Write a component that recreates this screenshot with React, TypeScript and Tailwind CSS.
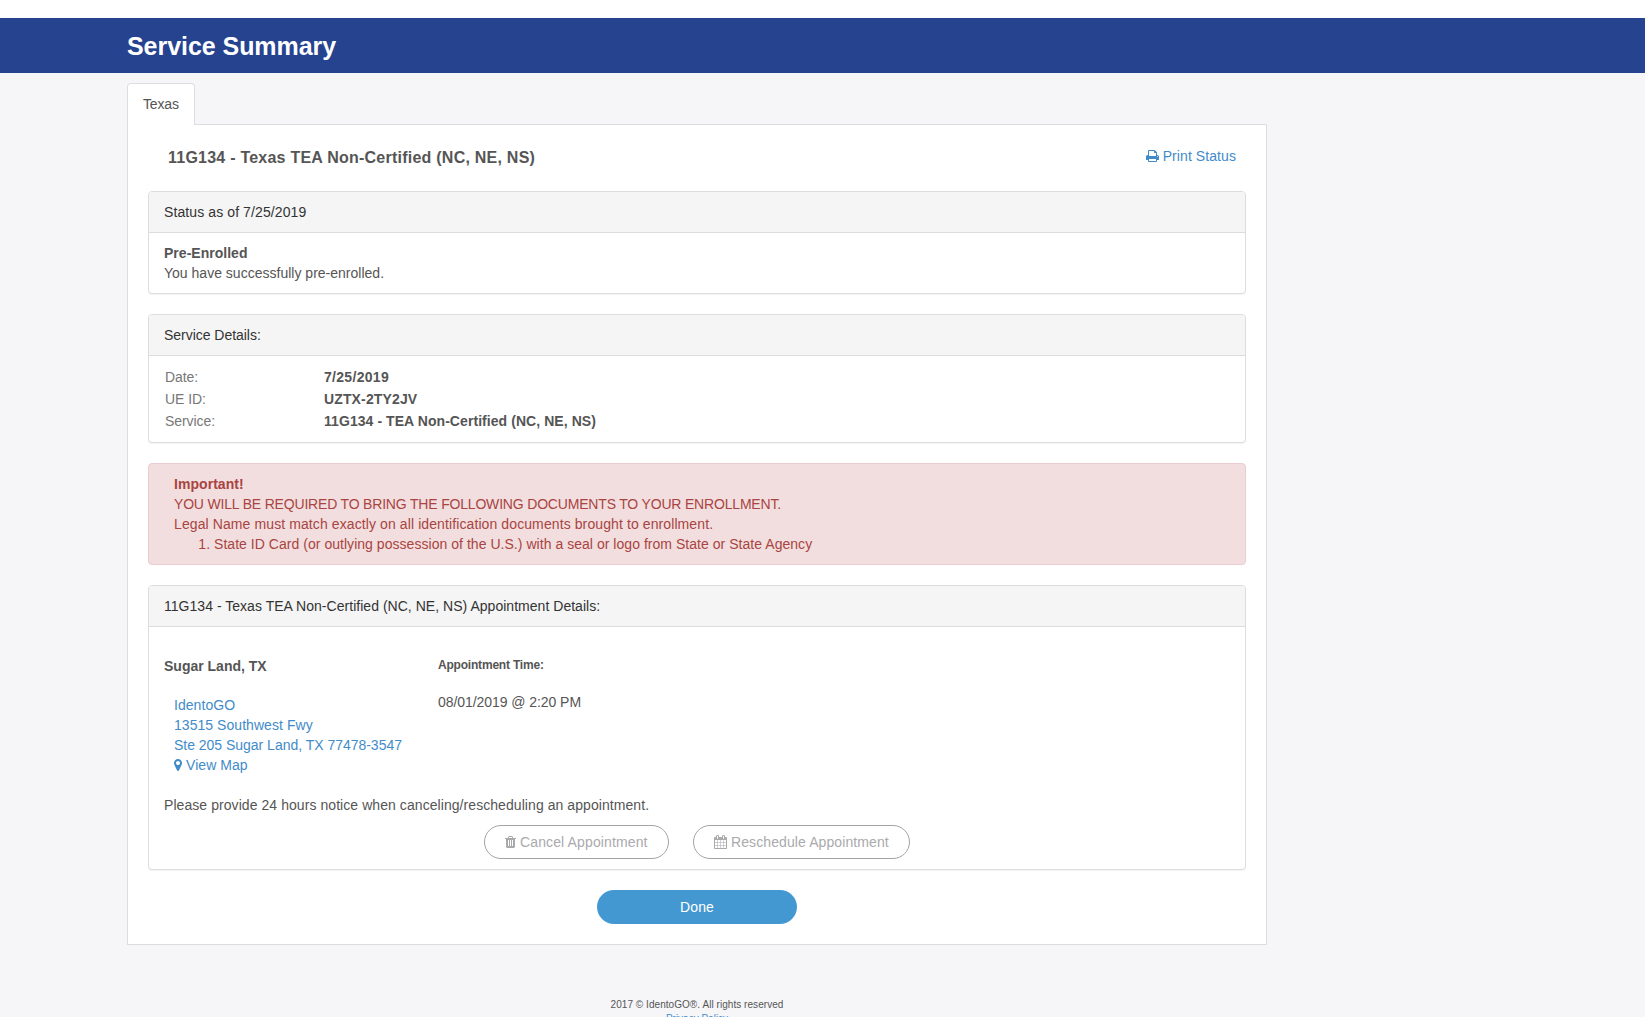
import type { ReactNode } from 'react';

function Glyph({ viewBox, d, className }: { viewBox: string; d: string; className: string }) {
  return (
    <svg viewBox={viewBox} fill="currentColor" aria-hidden="true" className={className}>
      <path d={d} />
    </svg>
  );
}

function PrintIcon() {
  return (
    <Glyph
      viewBox="64 0 1664 1792"
      className="h-[14px] w-[13px] shrink-0"
      d="M448 1536h896v-256h-896v256zm0-640h896v-384h-160q-40 0-68-28t-28-68v-160h-640v640zm1152 64q0-26-19-45t-45-19-45 19-19 45 19 45 45 19 45-19 19-45zm128 0v416q0 13-9.500 22.500t-22.500 9.500h-224v160q0 40-28 68t-68 28h-960q-40 0-68-28t-28-68v-160h-224q-13 0-22.500-9.500t-9.500-22.500v-416q0-79 56.500-135.500t135.500-56.500h64v-544q0-40 28-68t68-28h672q40 0 88 20t76 48l152 152q28 28 48 76t20 88v256h64q79 0 135.500 56.500t56.500 135.500z"
    />
  );
}

function MapMarkerIcon() {
  return (
    <Glyph
      viewBox="384 0 1024 1792"
      className="h-[14px] w-2 shrink-0"
      d="M1152 640q0-106-75-181t-181-75-181 75-75 181 75 181 181 75 181-75 75-181zm256 0q0 109-33 179l-364 774q-16 33-47.500 52t-67.500 19-67.500-19-46.500-52l-365-774q-33-70-33-179 0-212 150-362t362-150 362 150 150 362z"
    />
  );
}

function TrashIcon() {
  return (
    <Glyph
      viewBox="192 0 1408 1792"
      className="h-[14px] w-[11px] shrink-0"
      d="M704 1376v-704q0-14-9-23t-23-9h-64q-14 0-23 9t-9 23v704q0 14 9 23t23 9h64q14 0 23-9t9-23zm256 0v-704q0-14-9-23t-23-9h-64q-14 0-23 9t-9 23v704q0 14 9 23t23 9h64q14 0 23-9t9-23zm256 0v-704q0-14-9-23t-23-9h-64q-14 0-23 9t-9 23v704q0 14 9 23t23 9h64q14 0 23-9t9-23zm-544-992h448l-48-117q-7-9-17-11h-317q-10 2-17 11zm928 32v64q0 14-9 23t-23 9h-96v948q0 83-47 143.500t-113 60.500h-832q-66 0-113-58.500t-47-141.500v-952h-96q-14 0-23-9t-9-23v-64q0-14 9-23t23-9h309l70-167q15-37 54-63t79-26h320q40 0 79 26t54 63l70 167h309q14 0 23 9t9 23z"
    />
  );
}

function CalendarIcon() {
  return (
    <Glyph
      viewBox="64 0 1664 1792"
      className="h-[14px] w-[13px] shrink-0"
      d="M192 1664h288v-288h-288v288zm352 0h320v-288h-320v288zm-352-352h288v-320h-288v320zm352 0h320v-320h-320v320zm-352-384h288v-288h-288v288zm736 736h320v-288h-320v288zm-384-736h320v-288h-320v288zm768 736h288v-288h-288v288zm-384-352h320v-320h-320v320zm-352-864v-288q0-13-9.500-22.500t-22.500-9.500h-64q-13 0-22.500 9.500t-9.500 22.500v288q0 13 9.500 22.500t22.500 9.500h64q13 0 22.500-9.500t9.500-22.500zm736 864h288v-320h-288v320zm-384-384h320v-288h-320v288zm384 0h288v-288h-288v288zm32-480v-288q0-13-9.500-22.500t-22.500-9.500h-64q-13 0-22.500 9.500t-9.500 22.500v288q0 13 9.500 22.500t22.500 9.500h64q13 0 22.500-9.500t9.500-22.500zm384-64v1280q0 52-38 90t-90 38h-1408q-52 0-90-38t-38-90v-1280q0-52 38-90t90-38h128v-96q0-66 47-113t113-47h64q66 0 113 47t47 113v96h384v-96q0-66 47-113t113-47h64q66 0 113 47t47 113v96h128q52 0 90 38t38 90z"
    />
  );
}

function Card({ title, children }: { title: ReactNode; children: ReactNode }) {
  return (
    <section className="mb-5 rounded border border-[#ddd] bg-white shadow-[0_1px_1px_rgba(0,0,0,0.05)]">
      <div className="rounded-t-[3px] border-b border-[#ddd] bg-[#f5f5f5] px-[15px] py-[10px] text-[#333]">{title}</div>
      {children}
    </section>
  );
}

const details = [
  { label: 'Date:', value: <span className="tracking-[0.3px]">7/25/2019</span> },
  { label: 'UE ID:', value: <span className="tracking-[0.136px]">UZTX-2TY2JV</span> },
  { label: 'Service:', value: <span className="tracking-[0.066px]">11G134 - TEA Non-Certified (NC, NE, NS)</span> },
];

export default function App() {
  return (
    <div className="h-screen overflow-hidden bg-[#f6f6f9] font-['Liberation_Sans',Arial,sans-serif] text-sm leading-5 text-[#555]">
      <header className="border-t-[18px] border-white bg-[#26438f]">
        <h1 className="flex h-[55px] items-center pl-[127px] text-[25px] font-bold tracking-[-0.05px] text-white">
          Service Summary
        </h1>
      </header>

      <main className="ml-[127px] w-[1140px] pt-[10px]">
        <nav className="flex">
          <a className="relative z-10 -mb-px w-[68px] rounded-t border border-b-0 border-[#ddd] bg-white pt-[10px] pb-[11px] pl-[15px] tracking-[-0.15px]">
            Texas
          </a>
        </nav>

        <div className="border border-[#ddd] bg-white px-5">
          <div className="flex h-[66px] items-start justify-between pt-[21px] pr-[10px] pl-5">
            <h2 className="pt-0.5 text-base leading-5 font-bold tracking-[0.235px]">
              11G134 - Texas TEA Non-Certified (NC, NE, NS)
            </h2>
            <a className="flex items-center gap-1 tracking-[0.078px] text-[#428bca]">
              <PrintIcon />
              Print Status
            </a>
          </div>

          <Card title={<span className="tracking-[0.1px]">Status as of 7/25/2019</span>}>
            <div className="px-[15px] py-[10px]">
              <p className="font-bold tracking-[0.02px]">Pre-Enrolled</p>
              <p className="tracking-[0.01px]">You have successfully pre-enrolled.</p>
            </div>
          </Card>

          <Card title={<span className="tracking-[-0.03px]">Service Details:</span>}>
            <dl className="px-4 py-[10px]">
              {details.map((row) => (
                <div key={row.label} className="flex py-px">
                  <dt className="w-[159px] tracking-[-0.06px] text-[#777]">{row.label}</dt>
                  <dd className="font-bold">{row.value}</dd>
                </div>
              ))}
            </dl>
          </Card>

          <section className="mb-5 rounded border border-[#ebccd1] bg-[#f2dede] px-[25px] py-[10px] text-[#a94442]">
            <p className="font-bold tracking-[0.05px]">Important!</p>
            <p className="tracking-[-0.182px]">
              YOU WILL BE REQUIRED TO BRING THE FOLLOWING DOCUMENTS TO YOUR ENROLLMENT.
            </p>
            <p className="tracking-[0.1px]">
              Legal Name must match exactly on all identification documents brought to enrollment.
            </p>
            <ol className="list-decimal pl-10 tracking-[0.038px]">
              <li>State ID Card (or outlying possession of the U.S.) with a seal or logo from State or State Agency</li>
            </ol>
          </section>

          <Card
            title={
              <span className="tracking-[0.03px]">
                11G134 - Texas TEA Non-Certified (NC, NE, NS) Appointment Details:
              </span>
            }
          >
            <div className="px-[15px] pt-7 pb-[10px]">
              <div className="flex">
                <div className="w-[274px] pt-px">
                  <h3 className="mb-[19px] font-bold">Sugar Land, TX</h3>
                  <address className="pl-[10px] whitespace-nowrap text-[#428bca] not-italic">
                    <p className="tracking-[0.05px]">IdentoGO</p>
                    <p className="tracking-[0.05px]">13515 Southwest Fwy</p>
                    <p className="tracking-[-0.02px]">Ste 205 Sugar Land, TX 77478-3547</p>
                    <p className="flex items-center gap-1 tracking-[0.06px]">
                      <MapMarkerIcon />
                      View Map
                    </p>
                  </address>
                </div>
                <div>
                  <h4 className="mb-[17px] text-xs leading-5 font-bold tracking-[-0.2px]">Appointment Time:</h4>
                  <p className="tracking-[-0.06px]">08/01/2019 @ 2:20 PM</p>
                </div>
              </div>
              <p className="mt-5 tracking-[0.066px]">
                Please provide 24 hours notice when canceling/rescheduling an appointment.
              </p>
              <div className="mt-[10px] flex justify-center gap-6">
                <button className="flex h-[34px] w-[185px] items-center gap-1 rounded-full border border-[#a3a3a6] pl-5 tracking-[0.13px] whitespace-nowrap text-[#aaaaad]">
                  <TrashIcon />
                  Cancel Appointment
                </button>
                <button className="flex h-[34px] w-[217px] items-center gap-1 rounded-full border border-[#a3a3a6] pl-5 tracking-[0.1px] whitespace-nowrap text-[#aaaaad]">
                  <CalendarIcon />
                  Reschedule Appointment
                </button>
              </div>
            </div>
          </Card>

          <div className="flex justify-center pb-5">
            <button className="h-[34px] w-[200px] rounded-full bg-[#4498d2] tracking-[0.133px] text-white">Done</button>
          </div>
        </div>
      </main>

      <footer className="ml-[127px] w-[1140px] pt-[53px] text-center text-[10px] leading-[14px]">
        <p className="tracking-[0.054px]">2017 © IdentoGO®. All rights reserved</p>
        <a className="text-[#428bca]">Privacy Policy</a>
      </footer>
    </div>
  );
}
